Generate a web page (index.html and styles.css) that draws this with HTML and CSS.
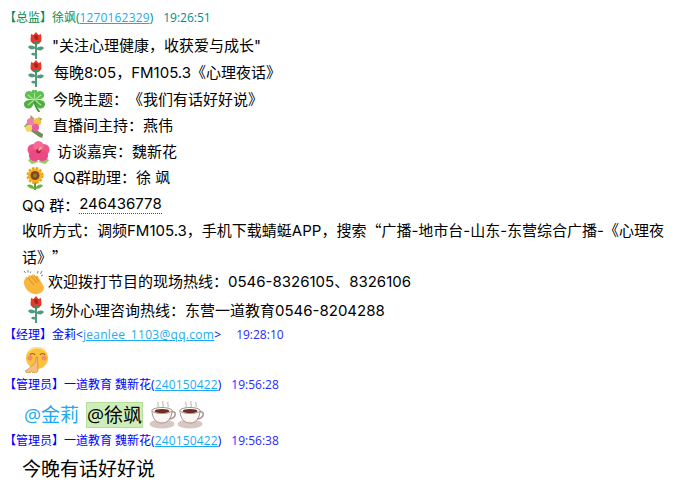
FILE: index.html
```html
<!DOCTYPE html>
<html lang="zh-CN">
  <head>
    <meta charset="UTF-8" />
    <title>QQ群聊天记录</title>
    <link rel="stylesheet" href="styles.css">
  </head>

  <body>
    <svg class="defs" width="0" height="0">
      <symbol id="rose" viewBox="0 0 16 27">
        <path d="M8 10V27" stroke="#4f9a78" stroke-width="2" fill="none"/>
        <path d="M8 16C5 13 2 13 0 15C2 18 5 18 8 16ZM8 17C11 14 14 14 16 16C14 19 11 19 8 17Z" fill="#4f9a78"/>
        <path d="M8 22C6 20 4 21 3 22C5 24 7 24 8 22Z" fill="#4f9a78"/>
        <path d="M3 2L5.5 3L8 0L10.5 3L13 2L13.5 8C13.5 10 11 12 8 12C5 12 2.5 10 2.5 8Z" fill="#e8382c"/>
        <path d="M6 3.5C8 2 11 4 10 7C9 9 6 8 6 3.5Z" fill="#a8231c"/>
        <path d="M4 11L8 9L12 11L8 13Z" fill="#3f8a68"/>
      </symbol>
      <symbol id="clover" viewBox="0 0 24 24">
        <path d="M12 11C8 11 2 11 2 6.500C2 2 7 1 9 3C9 1 11 0 12 1.500C13 0 15 1 15 3C17 1 22 2 22 6.500C22 11 16 11 12 11Z" fill="#5ec04d"/>
        <path d="M12 12C8 11 1 11 1 16C1 20 6 22 9 19C11 17 12 14 12 12ZM12 12C16 11 23 11 23 16C23 20 18 22 15 19C13 17 12 14 12 12Z" fill="#4fb040"/>
        <path d="M12 12C12 16 14 20 17 24" stroke="#3f9a35" stroke-width="2" fill="none"/>
        <path d="M12 11V4M5 6L11 11M19 6L13 11M5 17L11 12M19 17L13 12" stroke="#a8e098" stroke-width="1.200" fill="none"/>
      </symbol>
      <symbol id="bouquet" viewBox="0 0 24 24">
        <path d="M10 13L21 20L20 24L17 23L7 16Z" fill="#6f8f5c"/>
        <path d="M1 12L5 7L7 16ZM16 2L20 4L16 11Z" fill="#88a866"/>
        <path d="M8 0L12 4L7 6Z" fill="#8aa86a"/>
        <circle cx="8" cy="7" r="4" fill="#ee7fa8"/>
        <circle cx="15" cy="7" r="4" fill="#f4c13c"/>
        <circle cx="6" cy="14" r="3.500" fill="#f3d860"/>
        <circle cx="13" cy="13" r="3.800" fill="#e65fa0"/>
      </symbol>
      <symbol id="hibiscus" viewBox="0 0 24 24">
        <path d="M1 20L6 16L12 22L5 24ZM23 20L18 16L12 22L19 24Z" fill="#8fcb68"/>
        <circle cx="6.500" cy="9" r="6" fill="#f0548a"/>
        <circle cx="17.500" cy="9" r="6" fill="#f0548a"/>
        <circle cx="12" cy="5.500" r="5.500" fill="#f56a96"/>
        <circle cx="8" cy="15" r="6" fill="#ea4a82"/>
        <circle cx="16" cy="15" r="6" fill="#ea4a82"/>
        <circle cx="12" cy="10.500" r="2.500" fill="#b5174f"/>
        <path d="M12 10L15 6.500" stroke="#f4d24c" stroke-width="1.500"/>
      </symbol>
      <symbol id="sunflower" viewBox="0 0 20 23">
        <path d="M10 15V23" stroke="#5f9a3a" stroke-width="2"/>
        <path d="M10 21C7 17 4 17 2 18C3 21 7 22 10 22C13 22 17 21 18 18C16 17 13 17 10 21Z" fill="#6fb040"/>
        <circle cx="10" cy="8.500" r="7" fill="#f4b41f"/>
        <circle cx="10" cy="8.500" r="7.500" fill="none" stroke="#f0a015" stroke-width="2" stroke-dasharray="2.500 1.500"/>
        <circle cx="10" cy="8.500" r="4.500" fill="#7a4a20"/>
        <circle cx="10" cy="8.500" r="2" fill="#a8742e"/>
      </symbol>
      <symbol id="clap" viewBox="0 0 22 25">
        <path d="M1 1L2.500 3M5 0V2.500M8 1.500L7 3M15 1L14.500 3.500M19 1L17.500 4M20 5L18 6" stroke="#7a7a7a" fill="none"/>
        <path d="M1 11C0 16 5 23 11 24C17 25 21 21 21 17L17 10L14 5L12 7L10 4L8 6L6 5L5 7L3 7Z" fill="#f8b73c"/>
        <path d="M5 8L11 15M8 6L14 13M11 5L16 12" stroke="#d98c1e" fill="none"/>
      </symbol>
      <symbol id="pray" viewBox="0 0 26 26">
        <circle cx="14" cy="11" r="11" fill="#fbc23e"/>
        <path d="M6 4A11 11 0 0 1 22 4" stroke="#fde38a" stroke-width="2" fill="none"/>
        <path d="M7 8C8 6 11 6 12 8M17 8C18 6 21 6 22 8" stroke="#9a5a12" stroke-width="1.200" fill="none"/>
        <circle cx="7" cy="11" r="2.500" fill="#f58a6c"/>
        <circle cx="21" cy="11" r="2.500" fill="#f58a6c"/>
        <path d="M13 10C13 14 12 17 10 18C7 20 5 23 2 24L4 26H7L8.500 24L10 26H13L15 24L14.500 10Z" fill="#f4bf7c" stroke="#b8803c" stroke-width=".6"/>
      </symbol>
      <symbol id="coffee" viewBox="0 0 28 28">
        <path d="M9 1C8 3 10 4 9 6M14 0C13 3 15 3 14 6M19 1C18 3 20 4 19 6" stroke="#b5aca8" fill="none"/>
        <ellipse cx="13" cy="23" rx="12.500" ry="4.500" fill="#d8c8c4"/>
        <path d="M3 9H23C23 16 20 22 13 22C6 22 3 16 3 9Z" fill="#fbf7f5" stroke="#a8958f"/>
        <path d="M22 11C28 9 28 17 20 18" stroke="#a8958f" stroke-width="1.500" fill="none"/>
        <ellipse cx="13" cy="9.500" rx="10" ry="3" fill="#fff" stroke="#a8958f"/>
        <ellipse cx="13" cy="10" rx="7.500" ry="2" fill="#6e2f22"/>
      </symbol>
    </svg>

    <div class="chat">
      <div class="head zongjian">【总监】徐飒(<a class="qq">1270162329</a>)<span class="time">19:26:51</span></div>
      <div class="msg first">
        <p class="line rose-line"><svg class="emo rose"><use href="#rose"/></svg><span class="txt t1">"关注心理健康，收获爱与成长"</span></p>
        <p class="line rose-line second"><svg class="emo rose"><use href="#rose"/></svg><span class="txt t2">每晚8:05，FM105.3《心理夜话》</span></p>
        <p class="line"><svg class="emo clover"><use href="#clover"/></svg><span class="txt t3">今晚主题：《我们有话好好说》</span></p>
        <p class="line"><svg class="emo bouquet"><use href="#bouquet"/></svg><span class="txt t4">直播间主持：燕伟</span></p>
        <p class="line"><svg class="emo hibiscus"><use href="#hibiscus"/></svg><span class="txt t5">访谈嘉宾：魏新花</span></p>
        <p class="line"><svg class="emo sunflower"><use href="#sunflower"/></svg><span class="txt t6">QQ群助理：徐 飒</span></p>
        <p class="line">QQ 群：<span class="dotted">246436778</span></p>
        <p class="line wrap">收听方式：调频FM105.3，手机下载蜻蜓APP，搜索<span class="cjk">“</span>广播-地市台-山东-东营综合广播-《心理夜话》<span class="cjk">”</span></p>
        <p class="line"><svg class="emo clap"><use href="#clap"/></svg><span class="txt t7">欢迎拨打节目的现场热线：0546-8326105、8326106</span></p>
        <p class="line rose-line last"><svg class="emo rose"><use href="#rose"/></svg><span class="t8">场外心理咨询热线：东营一道教育0546-8204288</span></p>
      </div>

      <div class="head jingli">【经理】金莉&lt;<a class="qq mail">jeanlee_1103@qq.com</a>&gt;<span class="time">19:28:10</span></div>
      <div class="msg face-row"><svg class="pray"><use href="#pray"/></svg></div>

      <div class="head guanli">【管理员】一道教育 魏新花(<a class="qq">240150422</a>)<span class="time">19:56:28</span></div>
      <div class="msg big at-row">
        <span class="at">@金莉</span>
        <span class="at-me">@徐飒</span>
        <svg class="cup"><use href="#coffee"/></svg><svg class="cup"><use href="#coffee"/></svg>
      </div>

      <div class="head guanli">【管理员】一道教育 魏新花(<a class="qq">240150422</a>)<span class="time">19:56:38</span></div>
      <div class="msg big closing">今晚有话好好说</div>
    </div>
  </body>
</html>
```

FILE: styles.css
```css
/* Pagina */
body {
  margin: 0;
  background-color: #fff;
  color: #000;
  font-family: "Open Sans", "Noto Sans CJK SC", sans-serif;
  text-spacing-trim: space-all;
}

.defs {
  position: absolute;
}

.chat {
  width: 674px;
  height: 486px;
  overflow: hidden;
  padding-top: 10px;
  box-sizing: border-box;
}

/* Cabecalho de cada mensagem */
.head {
  height: 16px;
  line-height: 16px;
  font-size: 12px;
  white-space: nowrap;
  padding-left: 4px;
}

.zongjian { color: #0a8a4a; }
.jingli { color: #0000ff; }
.guanli { color: #0000ff; }

.qq {
  color: #1eaaf1;
  text-decoration: underline;
  letter-spacing: 0.15px;
}

.mail { letter-spacing: 0.3px; }

.time {
  margin-left: 10px;
}

.zongjian .time { color: #008c8c; }
.guanli .time { color: #2a2aff; }
.jingli .time { color: #2a2aff; margin-left: 15px; }

/* Corpo da mensagem */
.msg {
  padding-left: 22px;
  font-family: Inter, "Noto Sans CJK SC", sans-serif;
  font-size: 15px;
}

.first { padding-top: 6px; }

.line {
  margin: 0;
  display: flex;
  align-items: center;
  height: 26px;
  white-space: nowrap;
}

.rose-line { height: 27px; }
.second { height: 28px; }

.last {
  height: 28px;
  margin-bottom: 4px;
}

.wrap {
  display: block;
  height: 52px;
  line-height: 26px;
  width: 650px;
  white-space: normal;
}

.cjk {
  font-family: "Noto Sans CJK SC", sans-serif;
}

.txt { padding-bottom: 3px; }

.dotted {
  border-bottom: 1px dotted #0066cc;
  line-height: 19px;
}

.emo { flex: none; }

.rose { width: 16px; height: 27px; margin-left: 6px; }
.clover { width: 23px; height: 23px; margin-left: 1px; }
.bouquet { width: 23px; height: 23px; margin-left: 1px; }
.hibiscus { width: 23px; height: 23px; margin-left: 5px; }
.sunflower { width: 20px; height: 23px; margin-left: 3px; }
.clap { width: 22px; height: 25px; margin-left: 1px; }

.t1 { margin-left: 8px; }
.t2 { margin-left: 10px; }
.t3 { margin-left: 7px; }
.t4 { margin-left: 7px; }
.t5 { margin-left: 7px; }
.t6 { margin-left: 8px; }
.t7 { margin-left: 3px; }
.t8 { margin-left: 6px; }

.face-row {
  height: 34px;
  padding-left: 23px;
  display: flex;
  align-items: center;
}

.pray { width: 26px; height: 26px; }

.big {
  font-size: 19px;
  line-height: 28px;
  padding-top: 6px;
}

.closing { padding-top: 7px; }

.at-row {
  display: flex;
  align-items: center;
  height: 37px;
  padding-left: 24px;
  padding-top: 3px;
  font-family: "Open Sans", "Noto Sans CJK SC", sans-serif;
}

.at { color: #1eaaf1; margin-right: 7px; }

.at-me {
  background-color: #cdeeb8;
  border: 1px solid #b5dd9c;
  line-height: 24px;
  margin-right: 6px;
}

.cup { width: 28px; height: 28px; }
```
